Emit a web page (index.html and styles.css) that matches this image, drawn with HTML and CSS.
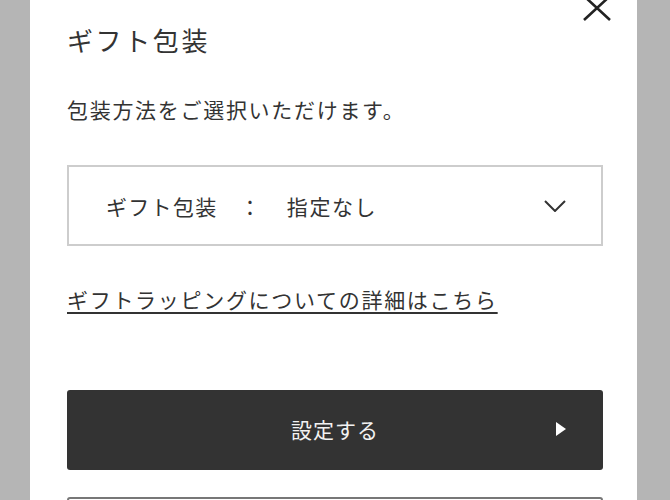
FILE: index.html
```html
<!DOCTYPE html>
<html lang="ja">
<head>
<meta charset="utf-8">
<link rel="stylesheet" href="styles.css">
</head>
<body>
<div class="modal">
  <button class="close" aria-label="閉じる">
    <svg width="30" height="26" viewBox="0 0 30 26"><path d="M2 1 L28 25 M28 1 L2 25" stroke="#222" stroke-width="2.6" fill="none"/></svg>
  </button>
  <h2 class="title">ギフト包装</h2>
  <p class="desc">包装方法をご選択いただけます。</p>
  <div class="select">
    <span class="sel-label">ギフト包装</span>
    <span class="sel-colon">：</span>
    <span class="sel-value">指定なし</span>
    <svg class="chev" width="22" height="12" viewBox="0 0 22 12"><path d="M1 1 L11 11 L21 1" stroke="#333" stroke-width="2" fill="none"/></svg>
  </div>
  <a class="link" href="#">ギフトラッピングについての詳細はこちら</a>
  <button class="btn">
    <span class="btn-text">設定する</span>
    <svg class="tri" width="10" height="14" viewBox="0 0 10 14"><path d="M0 0 L10 7 L0 14 Z" fill="#fff"/></svg>
  </button>
  <div class="btn2"></div>
</div>
</body>
</html>
```
FILE: styles.css
```css
html, body {
  margin: 0;
  padding: 0;
  background: #b5b5b5;
  height: 100%;
  overflow: hidden;
}
body {
  font-family: "Noto Sans CJK JP", "Noto Sans", sans-serif;
  color: #333;
}
.modal {
  position: relative;
  width: 607px;
  margin-left: 30px;
  min-height: 600px;
  background: #fff;
  box-sizing: border-box;
  padding: 0 34px 0 37px;
  display: flex;
  flex-direction: column;
  align-items: stretch;
}
.close {
  position: absolute;
  top: -5px;
  right: 25px;
  background: none;
  border: 0;
  padding: 0;
  line-height: 0;
}
.title {
  margin: 25px 0 0;
  font-size: 26px;
  line-height: 30px;
  font-weight: 400;
  letter-spacing: 2.6px;
  color: #333;
}
.desc {
  margin: 39px 0 0;
  font-size: 21px;
  line-height: 30px;
  letter-spacing: 1.7px;
}
.select {
  margin-top: 41px;
  height: 81px;
  box-sizing: border-box;
  border: 2px solid #cdcdcd;
  display: flex;
  align-items: center;
  padding: 0 35px 0 37px;
  font-size: 21px;
  letter-spacing: 1.3px;
}
.sel-colon {
  margin: 0 25px 0 22px;
}
.sel-value {
  flex: 1;
  letter-spacing: 1.6px;
}
.chev {
  display: block;
}
.link {
  margin-top: 38px;
  align-self: flex-start;
  font-size: 21px;
  line-height: 30px;
  letter-spacing: 1.7px;
  color: #333;
  text-decoration: underline;
  text-decoration-thickness: 1.5px;
  text-underline-offset: 4px;
}
.btn {
  margin-top: 76px;
  height: 80px;
  background: #333;
  border: 0;
  border-radius: 3px;
  color: #f2f2f2;
  position: relative;
  display: flex;
  align-items: center;
  justify-content: center;
  font-family: inherit;
  font-size: 21px;
  letter-spacing: 1px;
  padding: 0 0 3px;
}
.tri {
  position: absolute;
  right: 37px;
  top: 32px;
}
.btn2 {
  margin-top: 27px;
  height: 80px;
  border: 2px solid #777;
  border-radius: 3px;
}
```
